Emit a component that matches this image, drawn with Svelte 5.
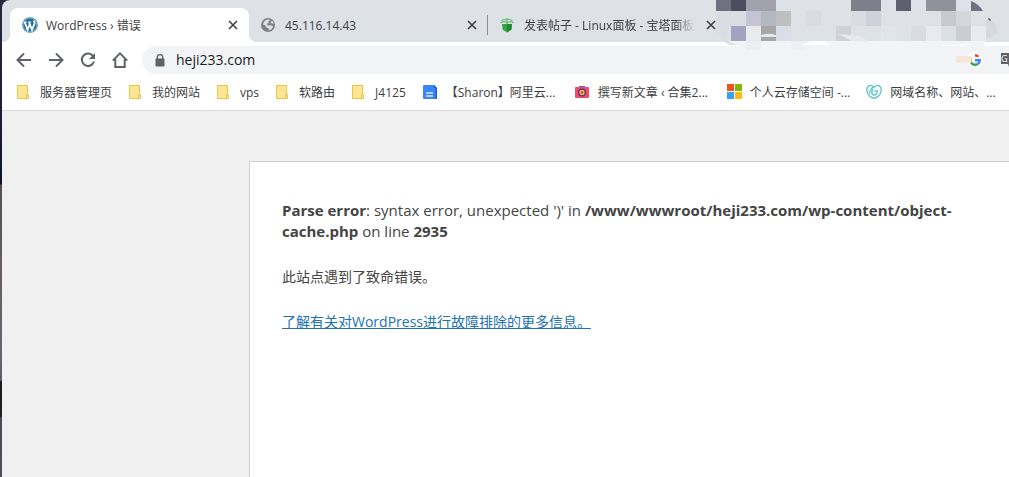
<script>
  let address = "heji233.com";

  const tabs = [
    { title: "WordPress › 错误", icon: "wordpress", active: true },
    { title: "45.116.14.43", icon: "globe", divider: true },
    { title: "发表帖子 - Linux面板 - 宝塔面板", icon: "pagoda", fade: true },
  ];

  const bookmarks = [
    { title: "服务器管理页", icon: "folder" },
    { title: "我的网站", icon: "folder" },
    { title: "vps", icon: "folder" },
    { title: "软路由", icon: "folder" },
    { title: "J4125", icon: "folder" },
    { title: "【Sharon】阿里云...", icon: "doc", long: true },
    { title: "撰写新文章 ‹ 合集2...", icon: "camera", long: true },
    { title: "个人云存储空间 -...", icon: "windows" },
    { title: "网域名称、网站、...", icon: "godaddy" },
  ];

  // blurred-out area: x, y, width, height, colour
  const mosaic = [
    [0, 0, 15, 11, "#6f7080"],
    [15, 0, 15, 11, "#4d4d60"],
    [30, 0, 30, 11, "#a0a1ab"],
    [135, 0, 30, 11, "#7d7f8b"],
    [180, 0, 15, 11, "#5e5f6f"],
    [210, 0, 30, 11, "#91919c"],
    [0, 11, 30, 15, "#dadde1"],
    [30, 11, 15, 15, "#c5c3d5"],
    [45, 11, 15, 15, "#b5b7be"],
    [60, 11, 15, 15, "#bfbfc0"],
    [90, 11, 15, 15, "#d8dbdf"],
    [135, 11, 15, 15, "#d9dce1"],
    [150, 11, 15, 15, "#cfd1da"],
    [225, 11, 15, 15, "#c8cacd"],
    [240, 11, 15, 15, "#d5d8db"],
    [15, 26, 15, 15, "#a3a2bf"],
    [30, 26, 15, 15, "#e8eaee"],
    [45, 26, 15, 15, "#a6a6a7"],
    [60, 26, 15, 15, "#dadde6"],
    [120, 26, 15, 15, "#d1d2d7"],
    [165, 26, 15, 15, "#e1e4e8"],
    [195, 26, 15, 15, "#d9dce3"],
    [210, 26, 15, 15, "#e8eaef"],
    [225, 26, 15, 15, "#dcdfe4"],
    [240, 26, 15, 15, "#cacdd2"],
    [255, 26, 15, 15, "#e9ebef"],
    [30, 41, 15, 9, "#eceef3"],
    [45, 41, 210, 5, "#f3f4f6"],
    [75, 41, 15, 9, "#eeeff4"],
    [240, 56, 15, 7, "#f6e6da"],
  ];
</script>

<div class="desktop">
  <div class="window">
    <div class="tabs">
      {#each tabs as tab}
        <div class="tab" class:active={tab.active} class:divider={tab.divider}>
          {@render icon(tab.icon)}
          <span class="title" class:fade={tab.fade}>{tab.title}</span>
          <button class="close" aria-label="关闭">
            <svg width="10" height="10" viewBox="0 0 10 10">
              <path d="M1 1L9 9M9 1L1 9" stroke="#3c4043" stroke-width="1.6" />
            </svg>
          </button>
        </div>
      {/each}
    </div>

    <div class="toolbar">
      <button class="nav" aria-label="后退">
        <svg width="16" height="16" viewBox="0 0 16 16">
          <path d="M15 8H2M8 1.5L1.5 8L8 14.5" />
        </svg>
      </button>
      <button class="nav" aria-label="前进">
        <svg width="16" height="16" viewBox="0 0 16 16">
          <path d="M1 8H14M8 1.5L14.5 8L8 14.5" />
        </svg>
      </button>
      <button class="nav" aria-label="刷新">
        <svg width="16" height="16" viewBox="0 0 16 16">
          <path d="M13.2 4.2A6.2 6.2 0 1 0 14 9.5" />
          <path d="M15 1V7H9Z" class="solid" />
        </svg>
      </button>
      <button class="nav" aria-label="主页">
        <svg width="16" height="16" viewBox="0 0 16 16">
          <path d="M0.8 8.6L8 1.4L15.2 8.6M3.3 7V14.9H12.7V7" />
        </svg>
      </button>
      <div class="omnibox">
        <svg class="lock" width="10" height="13" viewBox="0 0 10 13">
          <path d="M2.3 5V3.3a2.7 2.7 0 0 1 5.4 0V5" fill="none" stroke="#5f6368" stroke-width="1.4" />
          <rect x="0.5" y="4.5" width="9" height="8" rx="1" fill="#5f6368" />
        </svg>
        <input type="text" aria-label="地址" bind:value={address} />
        <svg class="google" width="16" height="16" viewBox="0 0 16 16">
          <circle cx="8" cy="8" r="8" fill="#fff" />
          <g fill="none" stroke-width="2.4">
            <path d="M11.4 4.8A4.7 4.7 0 0 0 8 3.3" stroke="#ea4335" />
            <path d="M4 5.6A4.7 4.7 0 0 0 4 10.6" stroke="#fbbc05" />
            <path d="M4 10.4A4.7 4.7 0 0 0 11 11.8" stroke="#34a853" />
            <path d="M8 8.2H12.8A4.7 4.7 0 0 1 11 11.8" stroke="#4285f4" />
          </g>
        </svg>
        <svg class="translate" width="18" height="16" viewBox="0 0 18 16">
          <path d="M1 1H9L10 3H17V15H9L8 12H1Z" fill="#5f6368" />
          <text x="1" y="10" font-size="9" fill="#fff">G</text>
        </svg>
      </div>
    </div>

    <nav class="bookmarks">
      {#each bookmarks as bookmark}
        <a href="#bookmark">
          {@render icon(bookmark.icon)}
          <span class:long={bookmark.long}>{bookmark.title}</span>
        </a>
      {/each}
    </nav>

    <main>
      <div class="error-page">
        <p class="parse">
          <b>Parse error</b>: syntax error, unexpected ')' in
          <b>/www/wwwroot/heji233.com/wp-content/object-cache.php</b>
          on line <b>2935</b>
        </p>
        <p>此站点遇到了致命错误。</p>
        <p><a href="#troubleshooting">了解有关对WordPress进行故障排除的更多信息。</a></p>
      </div>
    </main>

    <svg class="mosaic" width="285" height="64" viewBox="0 0 285 64" aria-hidden="true">
      <path d="M0 11H12V44Q2 38 0 26Z" fill="#dadde1" />
      <path d="M12 26H268V45H12Z" fill="#dee1e6" />
      <path d="M12 41H268V46H24Z" fill="#f3f4f6" />
      {#each mosaic as [x, y, width, height, fill]}
        <rect {x} {y} {width} {height} {fill} />
      {/each}
      <path d="M255 1Q263 4 267 11H255Z" fill="#6f7080" />
      <path d="M270 20Q281 20 281 30Q280 37 270 38Z" fill="#d6d9dd" />
      <path d="M42 36Q52 32 60 35V37H42Z" fill="#e6e7ea" />
      <path d="M122 34L145 36L152 42L136 41Z" fill="#e9eaed" />
      <path d="M84 45L99 41H108L114 45Z" fill="#fff" />
      <path d="M225 45Q240 46 253 43L250 46H226Z" fill="#fff" />
      <path d="M272 19H274V21" fill="none" stroke="#3c4043" />
    </svg>
  </div>
</div>

{#snippet icon(name)}
  <svg class="icon" width="16" height="16" viewBox="0 0 16 16">
    {#if name === "wordpress"}
      <circle cx="8" cy="8" r="7.8" fill="#21759b" />
      <circle cx="8" cy="8" r="7" fill="none" stroke="#cfe0ea" stroke-width="0.6" />
      <g fill="none" stroke="#fff" stroke-width="1.8">
        <path d="M2.6 5L5.6 12.8L8 6.4M7 5L10 12.8L12.6 6.4Q12.9 5 11.6 3.6" />
        <path d="M1.8 5H5M6 5H9.4" stroke-width="0.8" />
      </g>
    {:else if name === "globe"}
      <circle cx="7" cy="8" r="7" fill="#808285" />
      <path d="M3 5Q4 2.6 7.5 2.2L9 3.4L7 4.6L8 6L5.6 6.8L6.8 8.4L10 8.2L12.2 9.4Q11 12.8 8 13.6L7.8 11.4L5.4 10.6L4.6 8.4L2 7.6Z" fill="#dee1e6" />
      <path d="M9.6 4.6L11.6 4L12.8 6.4L10.6 6.8Z" fill="#dee1e6" />
    {:else if name === "pagoda"}
      <path d="M2 7H12L11.4 12.6L7 15.4L2.6 12.6Z" fill="#35a544" />
      <path d="M7 7H12L11.4 12.6L7 15.4Z" fill="#228a32" />
      <path d="M1.5 3.8Q5 1.4 7 2.8Q9 1.4 12.5 3.8M0.5 6Q4 3.4 7 6Q10 3.4 13.5 6M7 1V7" fill="none" stroke="#6dbb79" stroke-width="1.2" />
    {:else if name === "folder"}
      <rect x="1.5" y="1.5" width="10" height="13" fill="#fde693" stroke="#e8c54a" />
      <path d="M10.5 14.5V10.5H12.5V14.5Z" fill="#fde693" stroke="#e8c54a" />
    {:else if name === "doc"}
      <path d="M1 2Q1 1 2 1H12L15 4V14Q15 15 14 15H2Q1 15 1 14Z" fill="#3a85f7" />
      <path d="M12 1V4H13.5V15Q15 15 15 14V4Z" fill="#2056e0" />
      <path d="M4 9H11M4 12H11" stroke="#cfe5ff" stroke-width="1.4" />
    {:else if name === "camera"}
      <rect x="5" y="2" width="6" height="3" fill="#3d6eb4" />
      <rect x="1" y="3" width="14" height="11" rx="1" fill="#f5476a" />
      <circle cx="8" cy="8.5" r="4" fill="#5d2d83" />
      <circle cx="8" cy="8.5" r="2" fill="#8a4a9c" stroke="#fbc531" stroke-width="1.3" />
    {:else if name === "windows"}
      <rect x="1" y="0" width="7" height="7" fill="#f25022" />
      <rect x="9" y="0" width="7" height="7" fill="#7fba00" />
      <rect x="1" y="8" width="7" height="7" fill="#35a2f0" />
      <rect x="9" y="8" width="7" height="7" fill="#ffb912" />
    {:else if name === "godaddy"}
      <g fill="none" stroke="#68c8cf" stroke-width="1.4">
        <path d="M8 3.2C4.6-0.4 0.6 2 0.8 6C1 10.6 4.6 14.2 8 14.2C11.4 14.2 15 10.6 15.2 6C15.4 2 11.4-0.4 8 3.2Z" />
        <path d="M3.6 10.2C3 6.4 6 3.2 8.6 2.8M8.4 7H11.2C11.2 9.6 9.8 11 8 11C5.4 11 5 7.4 7.4 5" />
      </g>
    {/if}
  </svg>
{/snippet}

<style>
  :global(body) {
    background: #f0f0f0;
  }

  .desktop {
    min-height: 100vh;
    padding-left: 2px;
    box-sizing: border-box;
    display: flex;
    overflow: hidden;
    background: linear-gradient(#2a2840 0, #1d1e38 110px, #10142c 184px, #55504f 185px, #645c60 260px, #6b6470 350px, #5d5866 380px, #1b1820 382px, #22201f 416px, #4e4a58 418px, #504c5c 100%);
    font-family: "Open Sans", "Noto Sans CJK SC", sans-serif;
    color: #3c4043;
  }

  .window {
    position: relative;
    flex: 1;
    min-width: 0;
    display: flex;
    flex-direction: column;
    overflow: hidden;
    background: #dee1e6;
    border-top-left-radius: 8px;
  }

  button {
    display: flex;
    align-items: center;
    justify-content: center;
    padding: 0;
    border: none;
    background: none;
    cursor: pointer;
  }

  svg {
    flex: none;
  }

  .tabs {
    display: flex;
    height: 34px;
    padding: 8px 8px 0;
  }

  .tab {
    position: relative;
    display: flex;
    align-items: center;
    flex: none;
    gap: 8px;
    width: 239px;
    padding: 0 8px 0 12px;
    box-sizing: border-box;
    font-size: 12px;
  }

  .tab.active {
    background: #fff;
    border-radius: 8px 8px 0 0;
  }

  /* flared bottom corners of the active tab */
  .tab.active::before,
  .tab.active::after {
    content: "";
    position: absolute;
    bottom: 0;
    width: 8px;
    height: 8px;
  }

  .tab.active::before {
    left: -8px;
    background: radial-gradient(circle at 0 0, transparent 8px, #fff 8px);
  }

  .tab.active::after {
    right: -8px;
    background: radial-gradient(circle at 100% 0, transparent 8px, #fff 8px);
  }

  .tab.divider::after {
    content: "";
    position: absolute;
    right: 0;
    top: 7px;
    width: 1px;
    height: 20px;
    background: #8a8d91;
  }

  .title {
    flex: 1;
    min-width: 0;
    white-space: nowrap;
  }

  .title.fade {
    mask-image: linear-gradient(to right, #000 88%, transparent);
  }

  .close {
    width: 16px;
    height: 16px;
  }

  .toolbar {
    display: flex;
    align-items: center;
    height: 28px;
    padding: 4px 0 0 6px;
    background: #fff;
  }

  .nav {
    width: 32px;
    height: 28px;
  }

  .nav path {
    fill: none;
    stroke: #5f6368;
    stroke-width: 2;
  }

  .nav path.solid {
    fill: #5f6368;
    stroke: none;
  }

  .omnibox {
    flex: 1;
    min-width: 0;
    display: flex;
    align-items: center;
    height: 28px;
    margin-left: 6px;
    padding-left: 13px;
    background: #f1f3f4;
    border-radius: 14px 0 0 14px;
    overflow: hidden;
  }

  .omnibox input {
    flex: 1;
    min-width: 0;
    height: 20px;
    margin: 0 0 2px 11px;
    padding: 0;
    border: none;
    outline: none;
    background: none;
    font-family: inherit;
    font-size: 14px;
    color: #202124;
  }

  .google {
    margin-right: 17px;
  }

  .translate {
    margin-right: -9px;
  }

  .bookmarks {
    display: flex;
    align-items: center;
    gap: 16px;
    height: 36px;
    padding-left: 14px;
    background: #fff;
    border-bottom: 1px solid #d8dadc;
    font-size: 12px;
    white-space: nowrap;
  }

  .bookmarks a {
    display: flex;
    align-items: center;
    gap: 8px;
    color: inherit;
    text-decoration: none;
  }

  .bookmarks .long {
    min-width: 112px;
  }

  main {
    flex: 1;
    padding: 50px 0 0 247px;
    background: #f0f0f0;
  }

  .error-page {
    height: 100%;
    padding: 38px 26px 32px 32px;
    box-sizing: border-box;
    background: #fff;
    border: 1px solid #ccd0d4;
    border-width: 1px 0 0 1px;
    color: #444;
  }

  .error-page p {
    max-width: 700px;
    margin: 0 0 24px;
    font-size: 14px;
    line-height: 21px;
  }

  .error-page .parse {
    font-size: 15px;
  }

  .error-page a {
    color: #2271b1;
  }

  .mosaic {
    position: absolute;
    top: 0;
    left: 714px;
    pointer-events: none;
  }
</style>
